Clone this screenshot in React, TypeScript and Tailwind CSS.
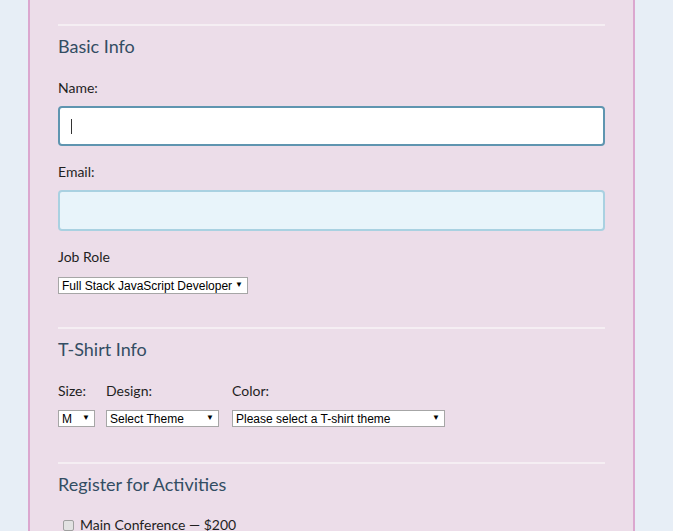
import React from "react";

const Divider = () => <div className="h-[2px] bg-[#f5eef3]" />;

const Heading = ({ children }: { children: React.ReactNode }) => (
  <h2 className="mt-[8px] text-[18px] leading-[24px] text-[#334d63] font-['Lato',sans-serif]">{children}</h2>
);

const Label = ({ children, className = "" }: { children: React.ReactNode; className?: string }) => (
  <label className={"block text-[14px] leading-[20px] text-[#1f1f1f] font-['Lato',sans-serif] " + className}>{children}</label>
);

const FakeSelect = ({ text, className = "" }: { text: string; className?: string }) => (
  <div
    className={
      "relative flex items-center h-[17px] bg-white border border-[#a6a6a6] pl-[3px] pr-[14px] text-[12px] leading-none text-black font-['Liberation_Sans',Arial,sans-serif] " +
      className
    }
  >
    <span className="whitespace-nowrap">{text}</span>
    <span className="absolute right-[4px] top-[3px] text-[8px] leading-none">▼</span>
  </div>
);

export default function App() {
  return (
    <div className="min-h-[531px] h-[531px] overflow-hidden bg-[#e7eef6]">
      <div className="ml-[28px] w-[607px] h-[531px] bg-[#ecdde9] border-x-2 border-[#dba7cf] px-[28px] pt-[24px]">
        <Divider />
        <Heading>Basic Info</Heading>
        <Label className="mt-[20px]">Name:</Label>
        <div className="mt-[8px] h-[40px] rounded-[4px] border-2 border-[#5f95b0] bg-white flex items-center pl-[11px]">
          <div className="w-[1px] h-[15px] bg-[#333]" />
        </div>
        <Label className="mt-[16px]">Email:</Label>
        <div className="mt-[8px] h-[41px] rounded-[4px] border-2 border-[#a9d1e1] bg-[#e8f4fa]" />
        <Label className="mt-[16px]">Job Role</Label>
        <div className="mt-[10px] flex">
          <FakeSelect text="Full Stack JavaScript Developer" className="w-[190px]" />
        </div>
        <div className="mt-[33px]">
          <Divider />
        </div>
        <Heading>T-Shirt Info</Heading>
        <div className="mt-[20px] flex">
          <div className="w-[48px]">
            <Label>Size:</Label>
            <FakeSelect text="M" className="mt-[9px] w-[37px]" />
          </div>
          <div className="w-[126px]">
            <Label>Design:</Label>
            <FakeSelect text="Select Theme" className="mt-[9px] w-[113px]" />
          </div>
          <div>
            <Label>Color:</Label>
            <FakeSelect text="Please select a T-shirt theme" className="mt-[9px] w-[213px]" />
          </div>
        </div>
        <div className="mt-[35px]">
          <Divider />
        </div>
        <Heading>Register for Activities</Heading>
        <div className="mt-[19px] flex items-center pl-[5px]">
          <div className="w-[11px] h-[11px] rounded-[2px] border border-[#a0a0a0] bg-[#e2e2e2]" />
          <span className="ml-[6px] text-[14px] leading-[20px] text-[#1f1f1f] font-['Lato',sans-serif]">Main Conference — $200</span>
        </div>
      </div>
    </div>
  );
}
